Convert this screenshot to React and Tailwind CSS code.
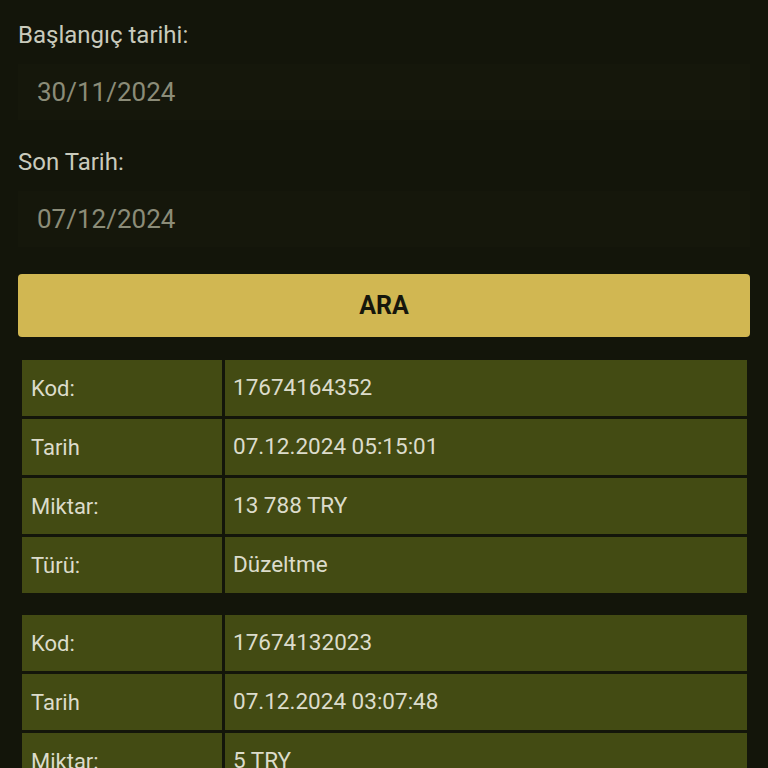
const records = [
  [
    ["Kod:", "17674164352"],
    ["Tarih", "07.12.2024 05:15:01"],
    ["Miktar:", "13 788 TRY"],
    ["Türü:", "Düzeltme"],
  ],
  [
    ["Kod:", "17674132023"],
    ["Tarih", "07.12.2024 03:07:48"],
    ["Miktar:", "5 TRY"],
    ["Türü:", "Düzeltme"],
  ],
];

const DateField = ({ label, value }) => (
  <div>
    <div className="h-[30px] flex items-center text-[24px] text-[#c9cabc]">{label}</div>
    <div className="mt-[14px] h-[56px] flex items-center px-[19px] bg-[#15170b] text-[26px] text-[#8b8c78]">
      {value}
    </div>
  </div>
);

export default function App() {
  return (
    <div
      className="min-h-screen bg-[#13150a] px-[18px] pt-[20px] pb-10"
      style={{ fontFamily: "Roboto, 'Noto Sans', sans-serif" }}
    >
      <DateField label="Başlangıç tarihi:" value="30/11/2024" />
      <div className="mt-[27px]">
        <DateField label="Son Tarih:" value="07/12/2024" />
      </div>

      <button className="mt-[27px] w-full h-[63px] rounded-[4px] bg-[#d1b752] text-[#16160c] text-[25px] font-bold">
        ARA
      </button>

      <div className="mt-[20px] flex flex-col gap-[16px]">
        {records.map((rows, i) => (
          <div key={i} className="grid grid-cols-[200px_1fr] gap-[3px] p-[3px] ml-[1px]">
            {rows.map(([k, v]) => (
              <div key={k} className="contents">
                <div className="h-[56px] flex items-center px-[9px] bg-[#434b13] text-[22px] text-[#dcdccb]">
                  {k}
                </div>
                <div className="h-[56px] flex items-center px-[8px] bg-[#434b13] text-[22.5px] text-[#dcdccb]">
                  {v}
                </div>
              </div>
            ))}
          </div>
        ))}
      </div>
    </div>
  );
}
